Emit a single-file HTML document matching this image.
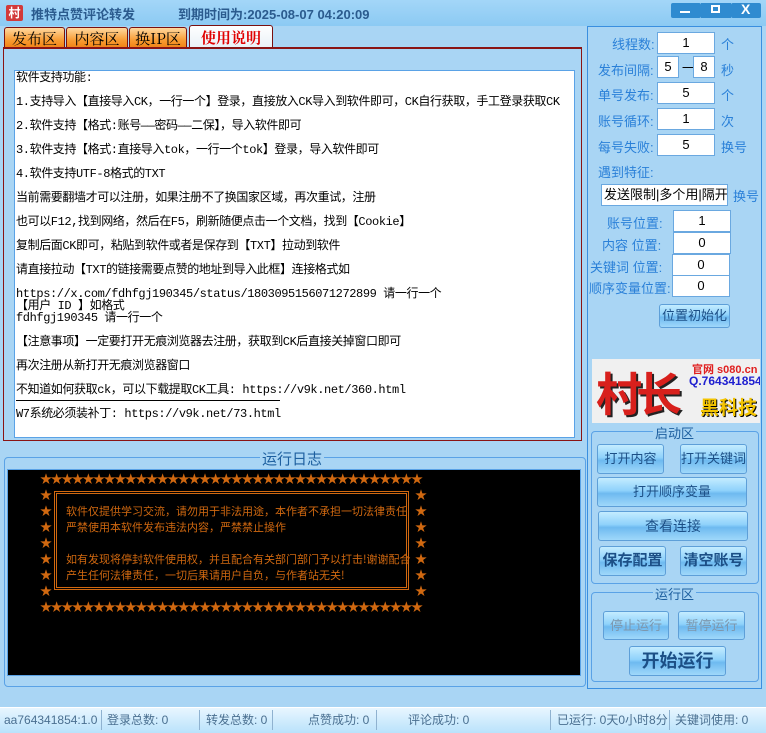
<!DOCTYPE html>
<html><head><meta charset="utf-8"><style>
*{margin:0;padding:0;box-sizing:border-box}
body{width:766px;height:733px;overflow:hidden;background:#a9d5f4;font-family:"Liberation Sans","Noto Sans CJK SC",sans-serif;position:relative}
.a{position:absolute;white-space:nowrap}
.title{left:0;top:0;width:766px;height:26px;background:linear-gradient(#a3d6f8,#8ccaf3)}
.tab{position:absolute;top:27px;height:22px;border:1px solid #7a1010;border-bottom:none;border-radius:3px 3px 0 0;background:linear-gradient(#ffd9a0,#f89a30 60%,#ef7d10);font:15px "Noto Serif CJK SC","Noto Sans CJK SC",serif;color:#000;text-align:center;line-height:21px}
.ta{left:14px;top:70px;width:561px;height:368px;background:#fff;border:1px solid #5aa2e6;overflow:hidden}
.ta div{position:absolute;left:1px;font:12px "Liberation Mono","Noto Sans CJK SC",monospace;color:#000;white-space:nowrap;line-height:14px;letter-spacing:-0.4px}
.lbl{color:#2a80d8;font-size:13px}
.inp{position:absolute;background:#fff;border:1px solid #6aa8e0;font-size:13px;text-align:center;line-height:20px;color:#000}
.btn{position:absolute;border:1px solid #5e9fd8;border-radius:3px;background:linear-gradient(#c4ecff,#8fd2fb 45%,#6ebaf0 55%,#9fd8fa);color:#1c4f86;font-size:13px;text-align:center}
.grp{position:absolute;border:1px solid #5aa2e6;border-radius:4px}
.gt{position:absolute;background:#a9d5f4;color:#1d5f9f;font-size:13px;padding:0 2px}
.log div{position:absolute;font:11px "Noto Sans CJK SC",sans-serif;color:#d06810;white-space:nowrap;line-height:16px}
.st{position:absolute;top:711px;font-size:12px;color:#4a6f90;line-height:18px}
.sep{position:absolute;top:710px;width:1px;height:20px;background:#8fb2d0}
</style></head><body>
<div class="a title"></div>
<div class="a" style="left:6px;top:5px;width:17px;height:16px;background:#d23a3a;border-radius:2px;color:#fff;font-size:12px;text-align:center;line-height:16px;font-weight:bold">村</div>
<div class="a" style="left:31px;top:4px;font-size:13px;font-weight:bold;color:#2b5b8e">推特点赞评论转发</div>
<div class="a" style="left:178px;top:4px;font-size:13px;font-weight:bold;color:#2b5b8e">到期时间为:2025-08-07 04:20:09</div>
<div class="a" style="left:671px;top:3px;width:30px;height:15px;background:#2f8bd0;border-radius:2px"></div>
<div class="a" style="left:701px;top:3px;width:30px;height:15px;background:#2f8bd0"></div>
<div class="a" style="left:731px;top:3px;width:30px;height:15px;background:#2f8bd0;border-radius:2px"></div>
<div class="a" style="left:680px;top:11px;width:10px;height:2px;background:#fff"></div>
<div class="a" style="left:711px;top:5px;width:9px;height:8px;border:2px solid #fff"></div>
<div class="a" style="left:741px;top:1px;color:#fff;font-size:14px;font-weight:bold">X</div>

<div class="tab" style="left:4px;width:61px">发布区</div>
<div class="tab" style="left:66px;width:62px">内容区</div>
<div class="tab" style="left:129px;width:58px">换IP区</div>
<div class="tab" style="left:189px;top:25px;height:24px;width:84px;background:linear-gradient(#fff,#e8f0f6);color:#e00000;line-height:24px;font-weight:bold">使用说明</div>
<div class="a" style="left:3px;top:47px;width:579px;height:394px;border:1px solid #8a1414;border-top:2px solid #8a1414"></div>

<div class="a ta">
<div style="top:0">软件支持功能:</div>
<div style="top:24px">1.支持导入【直接导入CK，一行一个】登录，直接放入CK导入到软件即可，CK自行获取，手工登录获取CK</div>
<div style="top:48px">2.软件支持【格式:账号——密码——二保】，导入软件即可</div>
<div style="top:72px">3.软件支持【格式:直接导入tok，一行一个tok】登录，导入软件即可</div>
<div style="top:96px">4.软件支持UTF-8格式的TXT</div>
<div style="top:120px">当前需要翻墙才可以注册，如果注册不了换国家区域，再次重试，注册</div>
<div style="top:144px">也可以F12,找到网络，然后在F5，刷新随便点击一个文档，找到【Cookie】</div>
<div style="top:168px">复制后面CK即可，粘贴到软件或者是保存到【TXT】拉动到软件</div>
<div style="top:192px">请直接拉动【TXT的链接需要点赞的地址到导入此框】连接格式如</div>
<div style="top:216px">https://x.com/fdhfgj190345/status/1803095156071272899 请一行一个</div>
<div style="top:228px">【用户 ID 】如格式</div>
<div style="top:240px">fdhfgj190345 请一行一个</div>
<div style="top:264px">【注意事项】一定要打开无痕浏览器去注册，获取到CK后直接关掉窗口即可</div>
<div style="top:288px">再次注册从新打开无痕浏览器窗口</div>
<div style="top:312px">不知道如何获取ck，可以下载提取CK工具: https://v9k.net/360.html</div>
<div style="top:329px;left:1px;width:264px;height:1px;background:#000"></div>
<div style="top:336px">W7系统必须装补丁: https://v9k.net/73.html</div>
</div>

<div class="grp" style="left:4px;top:457px;width:582px;height:230px"></div>
<div class="gt" style="left:260px;top:448px;font-size:15px">运行日志</div>
<div class="a log" style="left:7px;top:469px;width:574px;height:207px;background:#000;border:1px solid #5aa2e6">
<div style="left:32px;top:1px;font-size:12px;letter-spacing:-1.4px">★★★★★★★★★★★★★★★★★★★★★★★★★★★★★★★★★★★★</div>
<div style="left:32px;top:129px;font-size:12px;letter-spacing:-1.4px">★★★★★★★★★★★★★★★★★★★★★★★★★★★★★★★★★★★★</div>
<div style="left:32px;top:17px;font-size:12px;line-height:16px">★<br>★<br>★<br>★<br>★<br>★<br>★</div>
<div style="left:407px;top:17px;font-size:12px;line-height:16px">★<br>★<br>★<br>★<br>★<br>★<br>★</div>
<div style="left:46px;top:21px;width:355px;height:99px;border:3px double #d06810"></div>
<div style="left:46px;top:30px;width:355px;height:81px;border-left:3px double #d06810;border-right:3px double #d06810;background:#000"></div>
<div style="left:58px;top:33px">软件仅提供学习交流，请勿用于非法用途，本作者不承担一切法律责任</div>
<div style="left:58px;top:49px">严禁使用本软件发布违法内容，严禁禁止操作</div>
<div style="left:58px;top:81px">如有发现将停封软件使用权，并且配合有关部门部门予以打击!谢谢配合</div>
<div style="left:58px;top:97px">产生任何法律责任，一切后果请用户自负，与作者站无关!</div>
</div>

<div class="a" style="left:587px;top:26px;width:175px;height:663px;border:1px solid #3a8fe0"></div>
<div class="a lbl" style="left:612px;top:34px">线程数:</div><div class="inp" style="left:657px;top:32px;width:58px">1</div><div class="a lbl" style="left:721px;top:34px">个</div>
<div class="a lbl" style="left:598px;top:60px">发布间隔:</div><div class="inp" style="left:657px;top:56px;width:22px">5</div><div class="a" style="left:682px;top:59px;font-size:12px">一</div><div class="inp" style="left:693px;top:56px;width:22px">8</div><div class="a lbl" style="left:721px;top:60px">秒</div>
<div class="a lbl" style="left:598px;top:85px">单号发布:</div><div class="inp" style="left:657px;top:82px;width:58px">5</div><div class="a lbl" style="left:721px;top:85px">个</div>
<div class="a lbl" style="left:598px;top:111px">账号循环:</div><div class="inp" style="left:657px;top:108px;width:58px">1</div><div class="a lbl" style="left:721px;top:111px">次</div>
<div class="a lbl" style="left:598px;top:137px">每号失败:</div><div class="inp" style="left:657px;top:134px;width:58px">5</div><div class="a lbl" style="left:721px;top:137px">换号</div>
<div class="a lbl" style="left:598px;top:162px">遇到特征:</div>
<div class="inp" style="left:601px;top:184px;width:127px;text-align:left;padding-left:2px;overflow:hidden;white-space:nowrap">发送限制|多个用|隔开</div><div class="a lbl" style="left:733px;top:186px">换号</div>
<div class="a lbl" style="left:607px;top:213px">账号位置:</div><div class="inp" style="left:673px;top:210px;width:58px">1</div>
<div class="a lbl" style="left:602px;top:235px">内容 位置:</div><div class="inp" style="left:673px;top:232px;width:58px">0</div>
<div class="a lbl" style="left:590px;top:257px">关键词 位置:</div><div class="inp" style="left:672px;top:254px;width:58px">0</div>
<div class="a lbl" style="left:589px;top:278px">顺序变量位置:</div><div class="inp" style="left:672px;top:275px;width:58px">0</div>
<div class="btn" style="left:659px;top:304px;width:71px;height:24px;line-height:22px">位置初始化</div>

<div class="a" style="left:592px;top:359px;width:168px;height:64px;background:#f0f0f0;overflow:hidden">
<div class="a" style="left:4px;top:0px;font:bold 46px 'Noto Sans CJK SC',sans-serif;color:#d8201c;letter-spacing:-6px;text-shadow:2px 2px 0 #222">村长</div>
<div class="a" style="left:100px;top:2px;font-size:11px;color:#e02020;font-weight:bold">官网 s080.cn</div>
<div class="a" style="left:97px;top:15px;font-size:12px;color:#2020d0;font-weight:bold">Q.764341854</div>
<div class="a" style="left:108px;top:34px;font:bold 19px 'Noto Sans CJK SC',sans-serif;color:#f4c400;text-shadow:1px 1px 0 #000">黑科技</div>
</div>

<div class="grp" style="left:591px;top:431px;width:168px;height:153px"></div>
<div class="gt" style="left:653px;top:423px">启动区</div>
<div class="btn" style="left:597px;top:444px;width:67px;height:30px;line-height:28px">打开内容</div>
<div class="btn" style="left:680px;top:444px;width:67px;height:30px;line-height:28px">打开关键词</div>
<div class="btn" style="left:597px;top:477px;width:150px;height:30px;line-height:28px">打开顺序变量</div>
<div class="btn" style="left:598px;top:511px;width:150px;height:30px;line-height:28px;font-size:14px">查看连接</div>
<div class="btn" style="left:599px;top:546px;width:67px;height:30px;line-height:28px;font-size:15px;font-weight:bold">保存配置</div>
<div class="btn" style="left:680px;top:546px;width:67px;height:30px;line-height:28px;font-size:15px;font-weight:bold">清空账号</div>

<div class="grp" style="left:591px;top:592px;width:168px;height:90px"></div>
<div class="gt" style="left:653px;top:584px">运行区</div>
<div class="btn" style="left:603px;top:611px;width:66px;height:29px;line-height:27px;color:#7d97ad">停止运行</div>
<div class="btn" style="left:678px;top:611px;width:67px;height:29px;line-height:27px;color:#7d97ad">暂停运行</div>
<div class="btn" style="left:629px;top:646px;width:97px;height:30px;line-height:28px;font-size:18px;font-weight:bold">开始运行</div>

<div class="a" style="left:0;top:707px;width:766px;height:26px;background:linear-gradient(#e8f6ff,#b9e2fb);border-top:1px solid #fff"></div>
<div class="st" style="left:4px">aa764341854:1.0</div>
<div class="sep" style="left:101px"></div><div class="st" style="left:107px">登录总数: 0</div>
<div class="sep" style="left:199px"></div><div class="st" style="left:206px">转发总数: 0</div>
<div class="sep" style="left:272px"></div><div class="st" style="left:308px">点赞成功: 0</div>
<div class="sep" style="left:376px"></div><div class="st" style="left:408px">评论成功: 0</div>
<div class="sep" style="left:550px"></div><div class="st" style="left:557px">已运行: 0天0小时8分</div>
<div class="sep" style="left:669px"></div><div class="st" style="left:675px">关键词使用: 0</div>
</body></html>
